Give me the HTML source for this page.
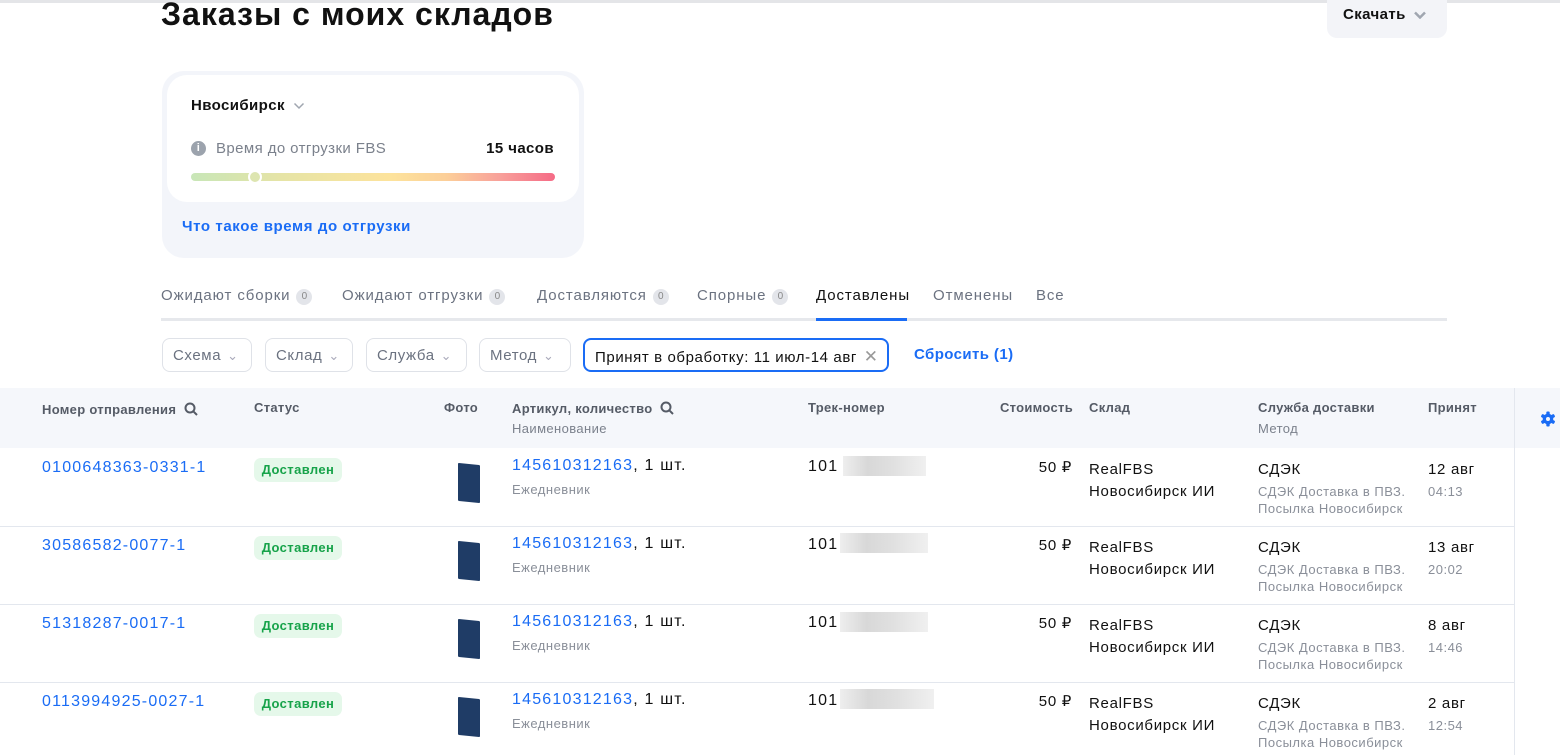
<!DOCTYPE html>
<html><head><meta charset="utf-8"><style>
*{margin:0;padding:0;box-sizing:border-box}
body{width:1560px;height:755px;overflow:hidden;background:#fff;font-family:"Liberation Sans",Arial,sans-serif;color:#111;position:relative;letter-spacing:0.4px}
.a{position:absolute;white-space:nowrap}
.topline{position:absolute;left:0;top:0;width:1560px;height:3px;background:#e4e5e8}
h1{position:absolute;left:161px;top:-4px;font-size:32px;font-weight:bold;letter-spacing:1px}
.dl{position:absolute;left:1327px;top:-10px;width:120px;height:48px;background:#f3f4f8;border-radius:10px;font-size:15px;font-weight:bold;padding:16px 0 0 16px}
.card{position:absolute;left:162px;top:71px;width:422px;height:187px;background:#f3f5fa;border-radius:22px}
.inner{position:absolute;left:5px;top:4px;width:412px;height:127px;background:#fff;border-radius:20px}
.bar{position:absolute;left:24px;top:98px;width:364px;height:8px;border-radius:4px;background:linear-gradient(90deg,#c8e6b8 0%,#e6e4a6 25%,#fde39c 55%,#fccf99 70%,#f8a09a 85%,#f56b86 100%)}
.knob{position:absolute;left:81px;top:95px;width:14px;height:14px;border-radius:50%;background:#dde5b0;border:2px solid #fff}
.tab{position:absolute;top:287px;font-size:15px;color:#6b7280;letter-spacing:0.9px}
.cnt{display:inline-block;width:16px;height:16px;border-radius:8px;background:#e3e5ea;color:#888;font-size:10px;text-align:center;line-height:16px;margin-left:6px;vertical-align:1px;letter-spacing:0}
.sel{position:absolute;top:338px;height:34px;border:1px solid #dfe2e8;border-radius:8px;font-size:15px;color:#6b7280;padding:8px 0 0 10px;letter-spacing:0.6px}
.sel span{color:#aab;font-size:13px;margin-left:6px}
.hdr{position:absolute;left:0;top:388px;width:1560px;height:60px;background:#f5f7fb}
.h{position:absolute;font-size:13px;color:#555b66;font-weight:bold;letter-spacing:0.3px}
.hs{position:absolute;font-size:13px;color:#7b818c;letter-spacing:0.4px}
.row{position:absolute;left:0;width:1514px;height:1px;background:#e3e7ee}
.lnk{color:#1a6cf5}
.big{font-size:16px;letter-spacing:1.2px}
.badge{position:absolute;width:88px;height:24px;background:#e5f8ea;color:#17a34a;font-weight:bold;font-size:13px;border-radius:7px;text-align:center;line-height:24px}
.book{position:absolute;width:22px;height:38px;background:#1f3c66;transform:skewY(6deg);border-radius:1px}
.t15{font-size:15px;letter-spacing:0.7px}
.g{color:#8a8f99;font-size:13px;letter-spacing:0.5px}
.blur{position:absolute;height:20px;background:linear-gradient(90deg,#eee,#d8d8d8 30%,#e0e0e0 60%,#f0f0f0)}
</style></head><body>
<div class="topline"></div>
<h1>Заказы с моих складов</h1>
<div class="dl">Скачать <svg width="12" height="8" viewBox="0 0 12 8" style="margin-left:4px"><path d="M1 1.5l5 5 5-5" fill="none" stroke="#a0a6b0" stroke-width="2.5"/></svg></div>
<div class="card"><div class="inner">
<div class="a" style="left:24px;top:22px;font-size:15px;font-weight:bold">Нвосибирск <svg width="12" height="8" viewBox="0 0 12 8" style="margin-left:4px"><path d="M1.5 1.5l4.5 4.5 4.5-4.5" fill="none" stroke="#a0a6b0" stroke-width="1.5"/></svg></div>
<div class="a" style="left:24px;top:66px;width:15px;height:15px;border-radius:50%;background:#9ca3ad;color:#fff;font-size:11px;font-weight:bold;text-align:center;line-height:15px">i</div>
<div class="a" style="left:49px;top:65px;font-size:15px;color:#7b818c">Время до отгрузки FBS</div>
<div class="a" style="right:25px;top:65px;font-size:15px;font-weight:bold">15 часов</div>
<div class="bar"></div><div class="knob"></div>
</div>
<div class="a" style="left:20px;top:147px;font-size:15px;font-weight:bold;color:#1a6cf5;letter-spacing:0.6px">Что такое время до отгрузки</div>
</div>
<div class="tab" style="left:161px">Ожидают сборки<span class="cnt">0</span></div>
<div class="tab" style="left:342px">Ожидают отгрузки<span class="cnt">0</span></div>
<div class="tab" style="left:537px">Доставляются<span class="cnt">0</span></div>
<div class="tab" style="left:697px">Спорные<span class="cnt">0</span></div>
<div class="tab" style="left:816px;color:#111">Доставлены</div>
<div class="tab" style="left:933px">Отменены</div>
<div class="tab" style="left:1036px">Все</div>
<div class="a" style="left:161px;top:318px;width:1286px;height:3px;background:#e6e8ec"></div>
<div class="a" style="left:816px;top:318px;width:91px;height:3px;background:#1a6cf5"></div>
<div class="sel" style="left:162px;width:90px">Схема<span>&#8964;</span></div>
<div class="sel" style="left:265px;width:88px">Склад<span>&#8964;</span></div>
<div class="sel" style="left:366px;width:101px">Служба<span>&#8964;</span></div>
<div class="sel" style="left:479px;width:92px">Метод<span>&#8964;</span></div>
<div class="sel" style="left:583px;width:306px;border:2px solid #1a6cf5;color:#111;padding:7px 0 0 10px">Принят в обработку: 11 июл-14 авг <span style="color:#999;font-size:17px;margin-left:2px">✕</span></div>
<div class="a" style="left:914px;top:346px;font-size:15px;font-weight:bold;color:#1a6cf5">Сбросить (1)</div>

<div class="hdr"></div>
<div class="a" style="left:1514px;top:388px;width:1px;height:367px;background:#e3e7ee"></div>
<div class="h" style="left:42px;top:402px">Номер отправления <svg width="14" height="14" viewBox="0 0 14 14" style="vertical-align:-2px;margin-left:4px"><circle cx="6" cy="6" r="4.5" fill="none" stroke="#555b66" stroke-width="2"/><path d="M9.3 9.3L13 13" stroke="#555b66" stroke-width="2"/></svg></div>
<div class="h" style="left:254px;top:400px">Статус</div>
<div class="h" style="left:444px;top:400px">Фото</div>
<div class="h" style="left:512px;top:401px">Артикул, количество <svg width="14" height="14" viewBox="0 0 14 14" style="vertical-align:-2px;margin-left:4px"><circle cx="6" cy="6" r="4.5" fill="none" stroke="#555b66" stroke-width="2"/><path d="M9.3 9.3L13 13" stroke="#555b66" stroke-width="2"/></svg></div>
<div class="hs" style="left:512px;top:421px">Наименование</div>
<div class="h" style="left:808px;top:400px">Трек-номер</div>
<div class="h" style="right:487px;top:400px">Стоимость</div>
<div class="h" style="left:1089px;top:400px">Склад</div>
<div class="h" style="left:1258px;top:400px">Служба доставки</div>
<div class="hs" style="left:1258px;top:421px">Метод</div>
<div class="h" style="left:1428px;top:400px">Принят</div>
<svg class="a" style="left:1540px;top:411px" width="16" height="16" viewBox="0 0 16 16"><g fill="#1a6cf5"><rect x="6.3" y="0.5" width="3.4" height="15" rx="1"/><rect x="6.3" y="0.5" width="3.4" height="15" rx="1" transform="rotate(60 8 8)"/><rect x="6.3" y="0.5" width="3.4" height="15" rx="1" transform="rotate(120 8 8)"/><circle cx="8" cy="8" r="5.3"/></g><circle cx="8" cy="8" r="2" fill="#f5f7fb"/></svg>

<div class="row" style="top:526px"></div>
<div class="row" style="top:604px"></div>
<div class="row" style="top:682px"></div>

<div class="a big lnk" style="left:42px;top:459px">0100648363-0331-1</div>
<div class="a big lnk" style="left:42px;top:537px">30586582-0077-1</div>
<div class="a big lnk" style="left:42px;top:615px">51318287-0017-1</div>
<div class="a big lnk" style="left:42px;top:693px">0113994925-0027-1</div>

<div class="badge" style="left:254px;top:458px">Доставлен</div>
<div class="badge" style="left:254px;top:536px">Доставлен</div>
<div class="badge" style="left:254px;top:614px">Доставлен</div>
<div class="badge" style="left:254px;top:692px">Доставлен</div>

<div class="book" style="left:458px;top:464px"></div>
<div class="book" style="left:458px;top:542px"></div>
<div class="book" style="left:458px;top:620px"></div>
<div class="book" style="left:458px;top:698px"></div>

<div class="a big" style="left:512px;top:457px"><span class="lnk">145610312163</span>, 1 шт.</div>
<div class="a g" style="left:512px;top:482px">Ежедневник</div>
<div class="a big" style="left:512px;top:535px"><span class="lnk">145610312163</span>, 1 шт.</div>
<div class="a g" style="left:512px;top:560px">Ежедневник</div>
<div class="a big" style="left:512px;top:613px"><span class="lnk">145610312163</span>, 1 шт.</div>
<div class="a g" style="left:512px;top:638px">Ежедневник</div>
<div class="a big" style="left:512px;top:691px"><span class="lnk">145610312163</span>, 1 шт.</div>
<div class="a g" style="left:512px;top:716px">Ежедневник</div>

<div class="a big" style="left:808px;top:458px">101</div><div class="blur" style="left:843px;top:456px;width:83px"></div>
<div class="a big" style="left:808px;top:536px">101</div><div class="blur" style="left:840px;top:533px;width:88px"></div>
<div class="a big" style="left:808px;top:614px">101</div><div class="blur" style="left:840px;top:612px;width:88px"></div>
<div class="a big" style="left:808px;top:692px">101</div><div class="blur" style="left:840px;top:689px;width:94px"></div>

<div class="a t15" style="right:488px;top:458px">50 ₽</div>
<div class="a t15" style="right:488px;top:536px">50 ₽</div>
<div class="a t15" style="right:488px;top:614px">50 ₽</div>
<div class="a t15" style="right:488px;top:692px">50 ₽</div>

<div class="a t15" style="left:1089px;top:459px;line-height:22px">RealFBS<br>Новосибирск ИИ</div>
<div class="a t15" style="left:1089px;top:537px;line-height:22px">RealFBS<br>Новосибирск ИИ</div>
<div class="a t15" style="left:1089px;top:615px;line-height:22px">RealFBS<br>Новосибирск ИИ</div>
<div class="a t15" style="left:1089px;top:693px;line-height:22px">RealFBS<br>Новосибирск ИИ</div>

<div class="a t15" style="left:1258px;top:461px">СДЭК</div><div class="a g" style="left:1258px;top:483px;line-height:17px">СДЭК Доставка в ПВЗ.<br>Посылка Новосибирск</div>
<div class="a t15" style="left:1258px;top:539px">СДЭК</div><div class="a g" style="left:1258px;top:561px;line-height:17px">СДЭК Доставка в ПВЗ.<br>Посылка Новосибирск</div>
<div class="a t15" style="left:1258px;top:617px">СДЭК</div><div class="a g" style="left:1258px;top:639px;line-height:17px">СДЭК Доставка в ПВЗ.<br>Посылка Новосибирск</div>
<div class="a t15" style="left:1258px;top:695px">СДЭК</div><div class="a g" style="left:1258px;top:717px;line-height:17px">СДЭК Доставка в ПВЗ.<br>Посылка Новосибирск</div>

<div class="a t15" style="left:1428px;top:461px">12 авг</div><div class="a g" style="left:1428px;top:484px">04:13</div>
<div class="a t15" style="left:1428px;top:539px">13 авг</div><div class="a g" style="left:1428px;top:562px">20:02</div>
<div class="a t15" style="left:1428px;top:617px">8 авг</div><div class="a g" style="left:1428px;top:640px">14:46</div>
<div class="a t15" style="left:1428px;top:695px">2 авг</div><div class="a g" style="left:1428px;top:718px">12:54</div>
</body></html>
